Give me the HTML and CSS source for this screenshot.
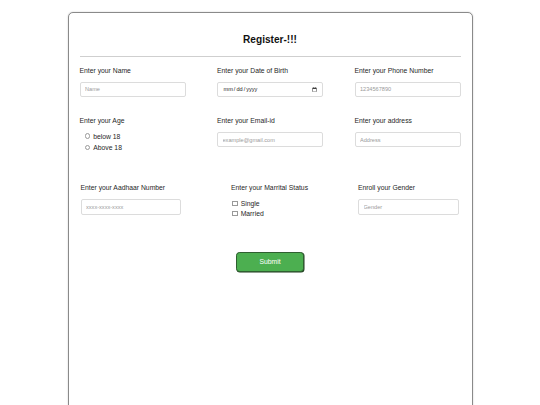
FILE: index.html
```html
<!DOCTYPE html>
<html lang="en">
  <head>
    <meta charset="UTF-8" />
    <meta name="viewport" content="width=device-width, initial-scale=1.0" />
    <title>Register</title>
    <link rel="stylesheet" href="styles.css">
  </head>
  <body>
    <div class="register-container">
      <h2 class="register-title">Register-!!!</h2>
      <hr class="divider" />

      <form class="register-form">
        <div class="form-grid">
          <div class="form-group">
            <label>Enter your Name</label>
            <input type="text" class="form-input" placeholder="Name" />
          </div>
          <div class="form-group">
            <label>Enter your Date of Birth</label>
            <input type="date" class="form-input date-input" />
          </div>
          <div class="form-group">
            <label>Enter your Phone Number</label>
            <input type="text" class="form-input" placeholder="1234567890" />
          </div>

          <div class="form-group">
            <label>Enter your Age</label>
            <div class="radio-list">
              <div class="choice"><input type="radio" name="age" /><span>below 18</span></div>
              <div class="choice"><input type="radio" name="age" /><span>Above 18</span></div>
            </div>
          </div>
          <div class="form-group">
            <label>Enter your Email-id</label>
            <input type="email" class="form-input" placeholder="example@gmail.com" />
          </div>
          <div class="form-group">
            <label>Enter your address</label>
            <input type="text" class="form-input" placeholder="Address" />
          </div>
        </div>

        <div class="form-row">
          <div class="form-group">
            <label>Enter your Aadhaar Number</label>
            <input type="text" class="form-input small" placeholder="xxxx-xxxx-xxxx" />
          </div>
          <div class="form-group">
            <label>Enter your Marrital Status</label>
            <div class="check-list">
              <div class="choice"><input type="checkbox" /><span>Single</span></div>
              <div class="choice"><input type="checkbox" /><span>Married</span></div>
            </div>
          </div>
          <div class="form-group">
            <label>Enroll your Gender</label>
            <input type="text" class="form-input small" placeholder="Gender" />
          </div>
        </div>

        <button type="submit" class="submit-btn">Submit</button>
      </form>
    </div>
  </body>
</html>
```

FILE: styles.css
```css
* {
  box-sizing: border-box;
  font-family: "Liberation Sans", Arial, sans-serif;
}

body {
  margin: 0;
  background: white;
}

.register-container {
  width: 405px;
  min-height: 430px;
  margin: 12px auto 0;
  padding: 0 11px;
  background: white;
  border: 1.5px solid #8a8a8a;
  border-radius: 5px;
  box-shadow: 0 0 2px rgba(0, 0, 0, 0.2);
}

.register-title {
  margin: 21.4px 0 0;
  font-size: 10.1px;
  line-height: 11.6px;
  text-align: center;
  color: #111;
}

.divider {
  margin: 10.3px 0 0;
  height: 0;
  border: none;
  border-top: 1px solid #cfcfcf;
}

.form-grid {
  display: grid;
  grid-template-columns: repeat(3, 106px);
  justify-content: space-between;
  row-gap: 19.9px;
  margin-top: 9.3px;
}

.form-group label {
  display: block;
  font-size: 6.8px;
  line-height: 7.8px;
  color: #1f1f1f;
  margin-bottom: 7.3px;
}

.form-input {
  display: block;
  width: 106px;
  height: 15.4px;
  padding: 0 4.5px;
  border: 1px solid #dcdcdc;
  border-radius: 2px;
  font-size: 5.6px;
  color: #333;
  outline: none;
}

.form-input::placeholder {
  color: #9a9a9a;
}

.form-input.small {
  width: 100.5px;
  height: 16px;
}

.date-input {
  color: #222;
}

.date-input::-webkit-calendar-picker-indicator {
  width: 5px;
  height: 5px;
  padding: 0;
  margin: 0 1px 0 0;
}

.radio-list {
  margin-top: -1.7px;
  padding-left: 5.5px;
}

.radio-list .choice {
  height: 11.3px;
}

.check-list {
  margin-top: -0.1px;
  padding-left: 1.5px;
}

.check-list .choice {
  height: 9.7px;
}

.choice {
  display: flex;
  align-items: center;
  gap: 2.8px;
  font-size: 6.8px;
  color: #1f1f1f;
}

.choice input {
  appearance: none;
  width: 5.4px;
  height: 5.4px;
  margin: 0;
  border: 0.6px solid #9a9a9a;
  background: white;
}

.choice input[type="radio"] {
  border-radius: 50%;
}

.choice input[type="checkbox"] {
  border-radius: 0;
}

.form-row {
  display: flex;
  justify-content: space-between;
  margin-top: 30.8px;
  padding: 0 2px 0 1px;
}

.submit-btn {
  display: block;
  width: 68px;
  height: 20.4px;
  margin: 33.4px auto 0;
  background: #4caf50;
  color: white;
  border: 1px solid #2f5f30;
  border-radius: 3.5px;
  box-shadow: 0.5px 0.5px 0 #1c3a1c;
  font-size: 6.8px;
  cursor: pointer;
}
```
